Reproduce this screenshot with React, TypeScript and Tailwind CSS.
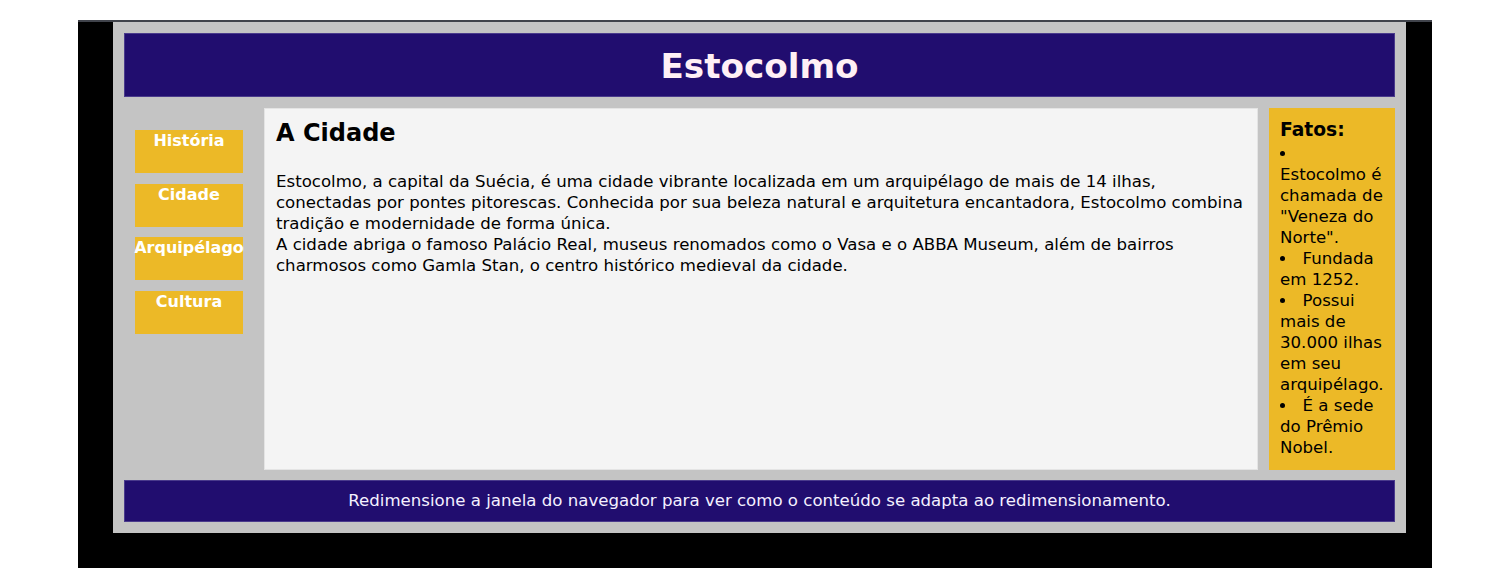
import React from "react";

const font = { fontFamily: '"DejaVu Sans", Verdana, sans-serif' };

export default function App() {
  const nav = ["História", "Cidade", "Arquipélago", "Cultura"];
  const facts = [
    'Estocolmo é chamada de "Veneza do Norte".',
    "Fundada em 1252.",
    "Possui mais de 30.000 ilhas em seu arquipélago.",
    "É a sede do Prêmio Nobel.",
  ];
  return (
    <div className="min-h-[586px] w-[1510px] bg-white pt-[20px]" style={font}>
      <div className="ml-[78px] w-[1354px] border-t-2 border-[#40434b] bg-black pb-[35px]">
        <div className="ml-[35px] flex w-[1293px] flex-col bg-[#c4c4c4] p-[11px]">
          <header className="flex h-[64px] items-center justify-center border border-[#4a3a8c] bg-[#210d6f]">
            <h1 className="pt-[2px] text-[34.2px] font-bold leading-[38px] text-[#fff0f5]">Estocolmo</h1>
          </header>
          <div className="mt-[11px] flex h-[362px] gap-[10px]">
            <nav className="flex w-[130px] shrink-0 flex-col gap-[10.3px] px-[11px] pt-[22px]">
              {nav.map((n) => (
                <div
                  key={n}
                  className="flex h-[43.3px] justify-center whitespace-nowrap bg-[#ecb927] pt-[2px] text-[16px] font-bold leading-[18px] text-white"
                >
                  {n}
                </div>
              ))}
            </nav>
            <main className="flex-1 border border-[#e4e4e4] bg-[#f4f4f4] px-[11px] pt-[10px] text-black">
              <h2 className="text-[24px] font-bold leading-[28px]">A Cidade</h2>
              <p className="mt-[24px] text-[16.6px] leading-[21px]">
                Estocolmo, a capital da Suécia, é uma cidade vibrante localizada em um arquipélago de mais de 14 ilhas,
                conectadas por pontes pitorescas. Conhecida por sua beleza natural e arquitetura encantadora, Estocolmo
                combina tradição e modernidade de forma única.
                <br />
                A cidade abriga o famoso Palácio Real, museus renomados como o Vasa e o ABBA Museum, além de bairros
                charmosos como Gamla Stan, o centro histórico medieval da cidade.
              </p>
            </main>
            <aside className="ml-[1px] w-[126px] shrink-0 bg-[#ecb927] px-[11px] pt-[11px] text-black">
              <h3 className="text-[18.7px] font-bold leading-[22px]">Fatos:</h3>
              <ul className="mt-[2px] list-inside list-disc text-[16.6px] leading-[21px]">
                {facts.map((f) => (
                  <li key={f}>{f}</li>
                ))}
              </ul>
            </aside>
          </div>
          <footer className="mt-[10px] flex h-[42px] items-center justify-center border border-[#4a3a8c] bg-[#210d6f] text-[16.6px] leading-[20px] text-[#f4f0ff]">
            Redimensione a janela do navegador para ver como o conteúdo se adapta ao redimensionamento.
          </footer>
        </div>
      </div>
    </div>
  );
}
